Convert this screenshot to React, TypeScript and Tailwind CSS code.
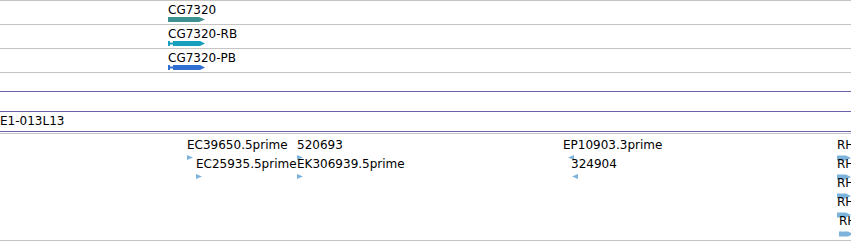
import React from 'react'

const font = { fontFamily: '"DejaVu Sans", Verdana, sans-serif' }

const genes = [
    { label: 'CG7320', color: '#3c9191', thin: false },
    { label: 'CG7320-RB', color: '#17a0bd', thin: true },
    { label: 'CG7320-PB', color: '#2f6fd1', thin: true },
]

// x/y = where the feature sits on the track canvas, ax = arrow offset from the label
const ests = [
    { label: 'EC39650.5prime', x: 187, y: 5, ax: 0, dir: 'r' },
    { label: 'EC25935.5prime', x: 196, y: 24, ax: 0, dir: 'r' },
    { label: '520693', x: 297, y: 5, ax: 0, dir: 'r' },
    { label: 'EK306939.5prime', x: 297, y: 24, ax: 0, dir: 'r' },
    { label: 'EP10903.3prime', x: 563, y: 5, ax: 4, dir: 'l' },
    { label: '324904', x: 571, y: 24, ax: 0, dir: 'l' },
]

const rh = [
    { x: 837, y: 5 },
    { x: 837, y: 24 },
    { x: 837, y: 43 },
    { x: 837, y: 62 },
    { x: 839, y: 81 },
]

const GeneBar = ({ color, thin }: { color: string; thin: boolean }) => (
    <svg width="40" height="7" viewBox="0 0 40 7" className="block">
        {thin ? (
            <>
                <rect x="0" y="1" width="2" height="5" fill={color} />
                <rect x="2" y="2.5" width="3" height="2" fill={color} />
                <rect x="5" y="1" width="2" height="5" fill={color} />
                <path d="M7 1 H32 L37 3.5 L32 6 H7 Z" fill={color} />
            </>
        ) : (
            <path d="M0 1 H31 L37 3.5 L31 6 H0 Z" fill={color} />
        )}
    </svg>
)

const SmallArrow = ({ dir }: { dir: string }) => (
    <svg width="7" height="5" viewBox="0 0 7 5" className="block">
        {dir === 'r' ? (
            <path d="M0 0 L6 2.5 L0 5 Z" fill="#7db3db" />
        ) : (
            <path d="M7 0 L1 2.5 L7 5 Z" fill="#7db3db" />
        )}
    </svg>
)

const LongArrow = () => (
    <svg width="14" height="6" viewBox="0 0 14 6" className="block">
        <path d="M0 0.5 H9 L14 3 L9 5.5 H0 Z" fill="#7db3db" />
    </svg>
)

export default function App() {
    return (
        <div className="w-[851px] h-[241px] bg-white overflow-hidden text-[12px] leading-[12px] text-black" style={font}>
            {/* gene track */}
            <div className="border-t border-[#c4c4c4]">
                {genes.map((g) => (
                    <div key={g.label} className="h-6 border-b border-[#c4c4c4] pl-[168px] pt-[3px] flex flex-col">
                        <span className="whitespace-nowrap">{g.label}</span>
                        <GeneBar color={g.color} thin={g.thin} />
                    </div>
                ))}
            </div>

            <div className="h-[18px]" />

            {/* clone track */}
            <div className="border-t border-[#6e5ea6]">
                <div className="h-5 border-b border-[#6e5ea6]" />
                <div className="h-5 border-b border-[#6e5ea6] pt-[3px] whitespace-nowrap">E1-013L13</div>
            </div>

            {/* est track */}
            <div className="mt-[1px] border-t border-b border-[#c4c4c4] h-[108px] relative">
                {ests.map((e) => (
                    <div
                        key={e.label}
                        className="absolute flex flex-col gap-1 whitespace-nowrap"
                        style={{ left: e.x, top: e.y }}
                    >
                        <span>{e.label}</span>
                        <div style={{ marginLeft: e.ax }}>
                            <SmallArrow dir={e.dir} />
                        </div>
                    </div>
                ))}
                {rh.map((r, i) => (
                    <div
                        key={i}
                        className="absolute flex flex-col gap-1 whitespace-nowrap"
                        style={{ left: r.x, top: r.y }}
                    >
                        <span>RH</span>
                        <LongArrow />
                    </div>
                ))}
            </div>
        </div>
    )
}
